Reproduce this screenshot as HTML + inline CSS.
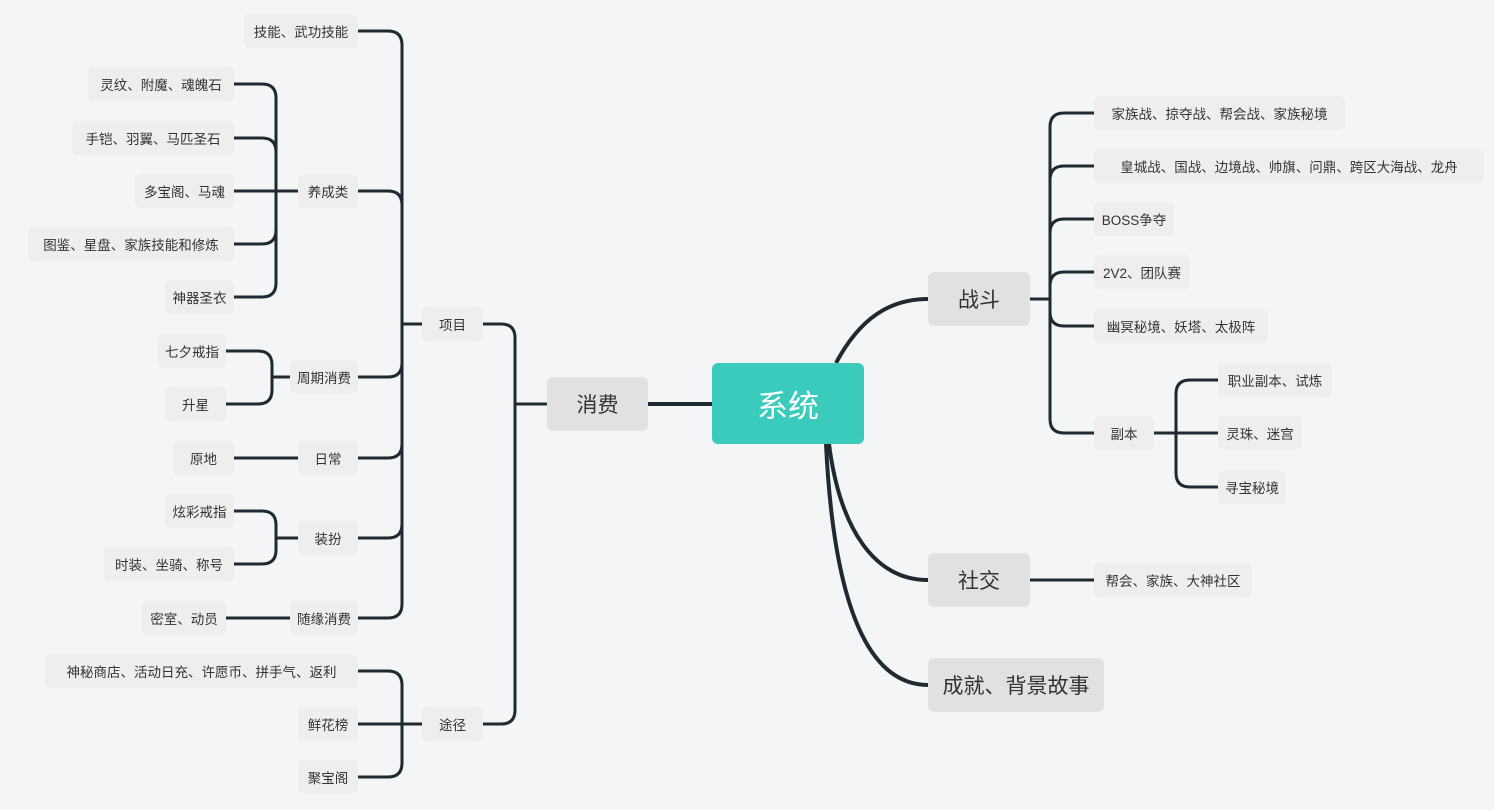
<!DOCTYPE html>
<html><head><meta charset="utf-8"><style>
html,body{margin:0;padding:0;background:#f3f5f7;width:1494px;height:810px;overflow:hidden;position:relative;font-family:"Liberation Sans","Noto Sans CJK SC",sans-serif}
.n{position:absolute;background:#eeeeee;border-radius:5px;color:#333;font-size:13.5px;display:flex;align-items:center;justify-content:center;height:34px;white-space:nowrap}
.m{background:#e1e1e1;font-size:21px;height:54px;border-radius:6px}
svg{position:absolute;left:0;top:0}
</style></head><body>
<svg id="s" width="1494" height="810"></svg>
<div id="nodes"></div>
<script>
var N=[
["技能、武功技能",244,358,31],["灵纹、附魔、魂魄石",88,234,84],["手铠、羽翼、马匹圣石",72,234,138],["多宝阁、马魂",135,234,191],["图鉴、星盘、家族技能和修炼",28,234,244],["神器圣衣",165,234,297],["养成类",298,358,191],["项目",422,483,324],["七夕戒指",158,226,351],["升星",165,226,404],["周期消费",290,358,377],["原地",173,234,458],["日常",298,358,458],["炫彩戒指",165,234,511],["时装、坐骑、称号",104,234,564],["装扮",298,358,538],["密室、动员",142,226,618],["随缘消费",290,358,618],["神秘商店、活动日充、许愿币、拼手气、返利",45,358,671],["鲜花榜",298,358,724],["聚宝阁",298,358,777],["途径",422,483,724],
["家族战、掠夺战、帮会战、家族秘境",1094,1345,113],["皇城战、国战、边境战、帅旗、问鼎、跨区大海战、龙舟",1094,1484,166],["BOSS争夺",1094,1174,219],["2V2、团队赛",1094,1190,272],["幽冥秘境、妖塔、太极阵",1094,1268,326],["副本",1094,1154,433],["职业副本、试炼",1218,1332,380],["灵珠、迷宫",1218,1302,433],["寻宝秘境",1218,1286,487],["帮会、家族、大神社区",1094,1252,580]];
var h='';
N.forEach(function(a){h+='<div class="n" style="left:'+a[1]+'px;width:'+(a[2]-a[1])+'px;top:'+(a[3]-17)+'px">'+a[0]+'</div>';});
h+='<div class="n m" style="left:547px;width:101px;top:377px">消费</div>';
h+='<div class="n m" style="left:928px;width:102px;top:272px">战斗</div>';
h+='<div class="n m" style="left:928px;width:102px;top:553px">社交</div>';
h+='<div class="n m" style="left:928px;width:176px;top:658px">成就、背景故事</div>';
h+='<div class="n" style="left:712px;width:152px;top:363px;height:81px;background:#3bcbbd;color:#fff;font-size:31px;border-radius:6px">系统</div>';
document.getElementById('nodes').innerHTML=h;
var p='';
function L(cx,cy,tx,px,py,pe){
 var r=Math.min(14,Math.abs(py-cy)); var s=py>cy?1:-1; var d=tx>cx?1:-1;
 if(r<1){p+='<path d="M'+cx+' '+cy+' H'+pe+'"/>';return;}
 p+='<path d="M'+cx+' '+cy+' H'+(tx-d*r)+' Q'+tx+' '+cy+' '+tx+' '+(cy+s*r)+' V'+py+' H'+pe+'"/>';
}
[31,191,377,458,538,618].forEach(function(y){L(358,y,402,0,324,422);});
[84,138,191,244,297].forEach(function(y){L(234,y,276,0,191,298);});
[351,404].forEach(function(y){L(226,y,272,0,377,290);});
[511,564].forEach(function(y){L(234,y,276,0,538,298);});
[671,724,777].forEach(function(y){L(358,y,402,0,724,422);});
[324,724].forEach(function(y){L(483,y,515,0,404,547);});
p+='<path d="M234 458 H298"/><path d="M226 618 H290"/>';
[113,166,219,272,326,433].forEach(function(y){L(1094,y,1050,0,299,1030);});
[380,433,487].forEach(function(y){L(1218,y,1176,0,433,1154);});
p+='<path d="M1030 580 H1094"/>';
p+='<path stroke-width="4" d="M648 404 H712"/>';
p+='<path stroke-width="4" d="M836 363 C860 318 890 299 928 299"/>';
p+='<path stroke-width="4" d="M829 444 C840 530 875 580 928 580"/>';
p+='<path stroke-width="4" d="M826 444 C834 610 870 685 928 685"/>';
document.getElementById('s').innerHTML='<g fill="none" stroke="#1f2a30" stroke-width="3">'+p+'</g>';
</script>
</body></html>
